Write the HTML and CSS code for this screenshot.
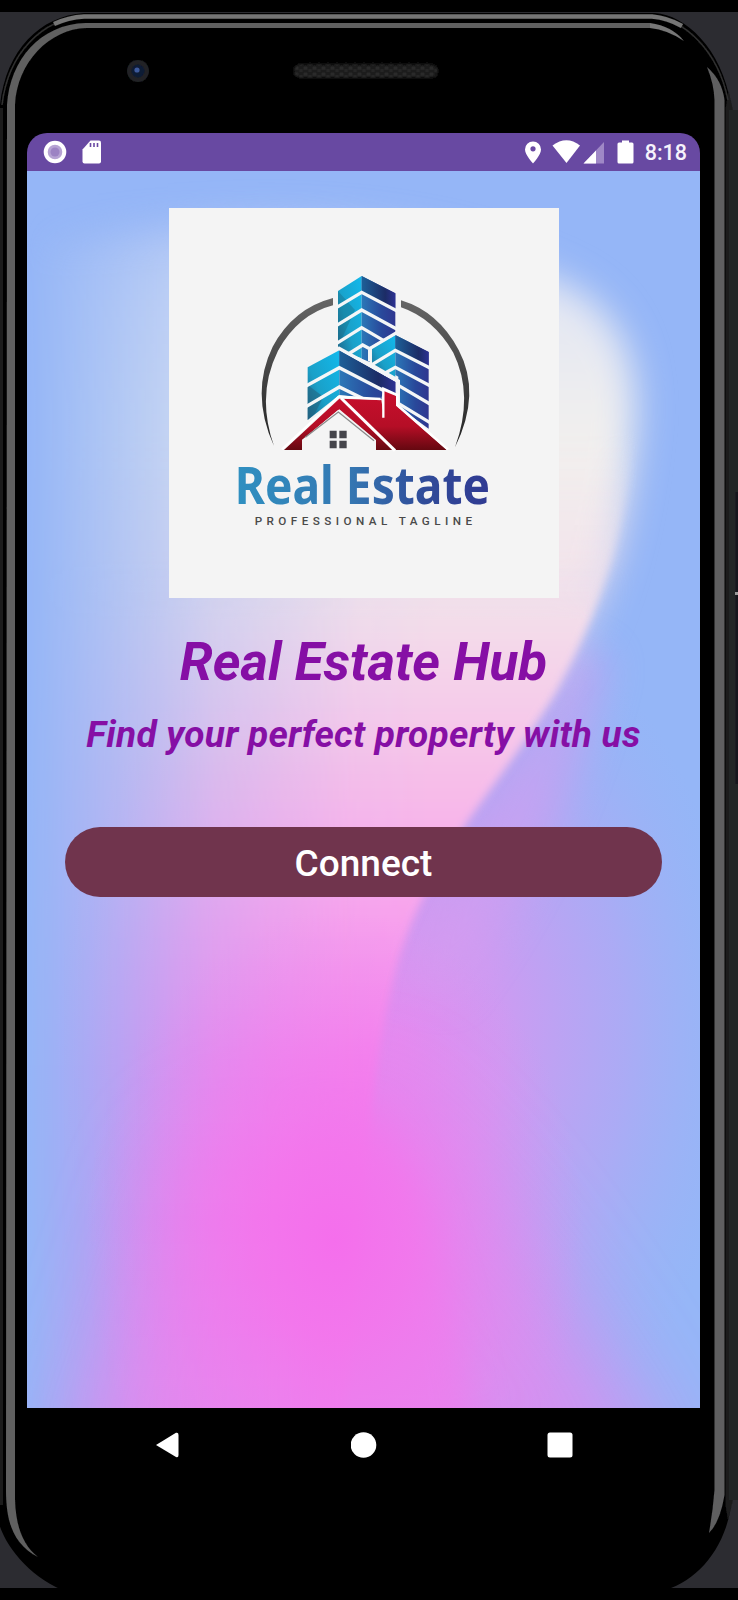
FILE: index.html
```html
<!DOCTYPE html>
<html lang="en">
<head>
<meta charset="utf-8">
<title>Real Estate Hub</title>
<link rel="stylesheet" href="styles.css">
</head>
<body>
<div class="device">
  <svg class="frame" viewBox="0 0 738 1600" aria-hidden="true">
    <defs>
      <filter id="soft"><feGaussianBlur stdDeviation="0.7"/></filter>
      <filter id="grille"><feGaussianBlur stdDeviation="1.1"/></filter>
      <pattern id="mesh" x="294" y="66" width="9" height="6" patternUnits="userSpaceOnUse">
        <rect width="9" height="6" fill="#181818"/><circle cx="2.5" cy="2" r="1.6" fill="#3a3a3a"/><circle cx="7" cy="4.5" r="1.4" fill="#363636"/>
      </pattern>
    </defs>
    <rect width="738" height="1600" fill="#000"/>
    <rect y="12" width="738" height="1576" fill="#2c2c31"/>
    <g filter="url(#soft)">
      <path d="M0 105C6 50 40 16 84 13H655C685 15 722 48 731 105V1505C726 1545 700 1580 665 1590H62C28 1575 4 1545-2 1520V105Z" fill="#050505"/>
      <path d="M725.500 110L728.500 90L733 110V1500L728 1520L725.500 1505Z" fill="#1c1c1d"/>
      <rect x="729" y="110" width="9" height="1390" fill="#242526"/>
      <rect x="735.500" y="492" width="4" height="292" fill="#17181a"/>
      <rect x="735" y="592" width="3" height="3" fill="#999"/>
      <path d="M2 105C8 53 42 19 84 16.500H652C684 19 718 50 728 100" fill="none" stroke="#303030" stroke-width="1.500"/>
      <path d="M54 24Q68 17.500 84 16.500H652Q668 18 682 26" fill="none" stroke="#747474" stroke-width="4.500"/>
      <path d="M7 105C10 60 40 24 86 23H650V28H86C50 29 17 62 15 105V1500C16 1530 25 1547 38 1557C15 1545 6 1525 6 1490Z" fill="#606060"/>
      <path d="M1.500 1505V108" stroke="#1a1a1a" stroke-width="3"/>
      <path d="M650 23Q672 26 684 41Q668 30 650 28Z" fill="#777"/>
      <path d="M707 67Q722 80 724.500 100V1495Q720 1522 709 1533Q713 1510 714.500 1490V100Q714 84 707 67Z" fill="#5f5f60"/>
      <circle cx="138" cy="71" r="11" fill="#202225"/>
      <circle cx="138" cy="71" r="6.500" fill="#111a35"/>
      <circle cx="137" cy="70" r="2.600" fill="#3d5a9c"/>
      <rect x="294" y="64" width="144" height="14" rx="7" fill="url(#mesh)" filter="url(#grille)"/>
    </g>
  </svg>

  <main class="screen">
    <header class="status">
      <svg class="status-left" viewBox="0 0 64 26">
        <circle cx="15" cy="13" r="9.300" fill="#b6a3d3" stroke="#fff" stroke-width="4"/><circle cx="15" cy="13" r="4.500" fill="#9c83c3"/>
        <path d="M42.500 10.500L50.500 1.500H59Q61 1.500 61 3.500V22.500Q61 24.500 59 24.500H44.500Q42.500 24.500 42.500 22.500Z" fill="#fff"/>
        <path d="M50.500 4V8M54 4V8M57.500 4V8" stroke="#6a49a3" stroke-width="1.600"/>
      </svg>
      <div class="status-right">
        <svg class="status-icons" viewBox="0 0 112 26">
          <path d="M10 2.500A8 8 0 0 1 18 10.500C18 16 10 24.500 10 24.500S2 16 2 10.500A8 8 0 0 1 10 2.500Z" fill="#fff"/><circle cx="10" cy="9.800" r="2.600" fill="#6a49a3"/>
          <path d="M29.500 6.500Q43.500-4 57 6.500L43.500 24Z" fill="#fff"/>
          <path d="M60.500 24.500L81 3V24.500Z" fill="#9f88c6"/><path d="M60.500 24.500L73 11.500V24.500Z" fill="#fff"/>
          <path d="M99 1.500H106V3.500H109Q110.500 3.500 110.500 5V23Q110.500 24.500 109 24.500H96Q94.500 24.500 94.500 23V5Q94.500 3.500 96 3.500H99Z" fill="#fff"/>
        </svg>
        <span class="clock">8:18</span>
      </div>
    </header>

    <section class="content">
      <svg class="wallpaper" viewBox="27 171 673 1236" preserveAspectRatio="none" aria-hidden="true">
        <defs>
          <filter id="b3" x="-20%" y="-20%" width="140%" height="140%"><feGaussianBlur stdDeviation="4"/></filter>
          <filter id="b20" x="-30%" y="-30%" width="160%" height="160%"><feGaussianBlur stdDeviation="18"/></filter>
          <filter id="b50" x="-50%" y="-50%" width="200%" height="200%"><feGaussianBlur stdDeviation="48"/></filter>
          <linearGradient id="tone" gradientUnits="userSpaceOnUse" x1="0" y1="171" x2="0" y2="1407">
            <stop offset="0" stop-color="#a9c1f5"/><stop offset=".1" stop-color="#e2e6f3"/><stop offset=".22" stop-color="#f2f0ee"/>
            <stop offset=".35" stop-color="#f3e0ea"/><stop offset=".5" stop-color="#f7bce9"/><stop offset=".6" stop-color="#f8a3ec"/>
            <stop offset=".72" stop-color="#f780ec"/><stop offset=".85" stop-color="#f572eb"/><stop offset="1" stop-color="#ee80ec"/>
          </linearGradient>
          <linearGradient id="fadeX" gradientUnits="userSpaceOnUse" x1="27" y1="0" x2="440" y2="0">
            <stop offset="0" stop-color="#000"/><stop offset=".15" stop-color="#383838"/><stop offset=".45" stop-color="#a8a8a8"/><stop offset=".8" stop-color="#f2f2f2"/><stop offset="1" stop-color="#fff"/>
          </linearGradient>
          <linearGradient id="upper" gradientUnits="userSpaceOnUse" x1="0" y1="560" x2="0" y2="740"><stop offset="0" stop-color="#fff"/><stop offset="1" stop-color="#000"/></linearGradient>
          <linearGradient id="lower" gradientUnits="userSpaceOnUse" x1="0" y1="430" x2="0" y2="620"><stop offset="0" stop-color="#000"/><stop offset="1" stop-color="#fff"/></linearGradient>
          <mask id="mx" maskUnits="userSpaceOnUse" x="-100" y="100" width="900" height="1400"><rect x="-100" y="100" width="900" height="1400" fill="url(#fadeX)"/></mask>
          <mask id="mu" maskUnits="userSpaceOnUse" x="-100" y="100" width="900" height="1400"><rect x="-100" y="100" width="900" height="1400" fill="url(#upper)"/></mask>
          <mask id="ml" maskUnits="userSpaceOnUse" x="-100" y="100" width="900" height="1400"><rect x="-100" y="100" width="900" height="1400" fill="url(#lower)"/></mask>
          <radialGradient id="mag"><stop offset="0" stop-color="#f56eec" stop-opacity=".95"/><stop offset=".3" stop-color="#f475ec" stop-opacity=".75"/><stop offset=".65" stop-color="#ee80ee" stop-opacity=".35"/><stop offset="1" stop-color="#e48cf0" stop-opacity="0"/></radialGradient>
          <radialGradient id="lav"><stop offset="0" stop-color="#e08ef0"/><stop offset=".3" stop-color="#d398f1" stop-opacity=".9"/><stop offset=".65" stop-color="#b3a7f4" stop-opacity=".75"/><stop offset="1" stop-color="#9db2f5" stop-opacity="0"/></radialGradient>
        </defs>
        <rect x="27" y="171" width="673" height="1236" fill="#95b6f7"/>
        <ellipse cx="400" cy="1040" rx="345" ry="470" fill="url(#lav)"/>
        <path d="M570 640L470 830L400 980L450 1000Q560 860 610 660Z" fill="#d49df0" opacity=".5" filter="url(#b20)"/>
        <path d="M370 1080Q500 1170 690 1500H60L180 1150Z" fill="#e08aef" opacity=".85" filter="url(#b50)"/>
        <g mask="url(#mx)">
          <g mask="url(#mu)"><path d="M27 245C200 215 400 205 560 280C625 310 645 370 632 450C622 540 600 610 556 692C520 752 488 790 462 830H-60V245Z" fill="url(#tone)" filter="url(#b20)"/></g>
          <g mask="url(#ml)"><path d="M27 225C200 190 400 190 560 275C625 310 645 370 632 450C622 540 600 610 556 692C520 752 488 790 462 830C425 888 404 930 392 985C383 1025 378 1060 374 1090C365 1160 360 1300 340 1460H-60V225Z" fill="url(#tone)" filter="url(#b3)" mask="url(#fadeLow)"/></g>
        </g>
        <path d="M374 1110C420 1170 450 1260 480 1460H300V1110Z" fill="#ee7ded" opacity=".75" filter="url(#b20)"/>
        <ellipse cx="335" cy="1240" rx="250" ry="330" fill="url(#mag)"/>
      </svg>

      <div class="logo">
        <svg class="logo-art" viewBox="0 0 870 840" role="img" aria-label="Real Estate">
          <defs>
            <linearGradient id="cy" x1="0" y1="1" x2="1" y2="0"><stop offset="0" stop-color="#1f6488"/><stop offset=".4" stop-color="#1aa0c8"/><stop offset="1" stop-color="#12b9ec"/></linearGradient>
            <linearGradient id="nv" x1="0" y1="0" x2="1" y2="0"><stop offset="0" stop-color="#2b78b8"/><stop offset=".6" stop-color="#29489a"/><stop offset="1" stop-color="#2f3690"/></linearGradient>
            <linearGradient id="dk" x1="0" y1="0" x2="1" y2="0"><stop offset="0" stop-color="#1d6098"/><stop offset=".7" stop-color="#1c2c66"/><stop offset="1" stop-color="#2d3192"/></linearGradient>
            <linearGradient id="rd" x1="0" y1="0" x2="0" y2="1"><stop offset="0" stop-color="#c80f2d"/><stop offset=".6" stop-color="#b50e26"/><stop offset="1" stop-color="#650810"/></linearGradient>
            <linearGradient id="word" gradientUnits="userSpaceOnUse" x1="55" y1="0" x2="803" y2="0"><stop offset="0" stop-color="#2f8fc0"/><stop offset=".45" stop-color="#3577b2"/><stop offset=".75" stop-color="#304b99"/><stop offset="1" stop-color="#303a92"/></linearGradient>
            <linearGradient id="arc" x1="0" y1="0" x2="0" y2="1"><stop offset="0" stop-color="#666"/><stop offset="1" stop-color="#222"/></linearGradient>
          </defs>
          <g fill="url(#arc)">
            <path d="M339 114Q220 145 158 260Q90 400 162 558Q108 405 174 272Q235 163 339 136Z"/>
            <path d="M543 121Q655 155 716 270Q785 400 705 562Q762 405 700 278Q640 175 543 142Z"/>
          </g>
          <path d="M425 48L354 93V260L375 278L425 295Z" fill="url(#cy)"/>
          <path d="M425 48L526 100V218L449 262V306L425 296Z" fill="url(#nv)"/>
          <path d="M425 48L526 100V150L425 95Z" fill="url(#dk)"/>
          <path d="M354 93L405 150L375 215L354 260Z" fill="#176078" opacity=".35"/>
          <path d="M526 225L456 264V310L526 350Z" fill="url(#cy)"/>
          <path d="M526 225L626 276V506L535 440V350L526 345Z" fill="url(#nv)"/>
          <path d="M526 225L626 276V322L526 270Z" fill="url(#dk)"/>
          <path d="M358 271L263 322V480L358 405Z" fill="url(#cy)"/>
          <path d="M263 375L310 410L285 460L263 480Z" fill="#215d78" opacity=".5"/>
          <path d="M358 271L526 366V400L490 388L484 418L358 405Z" fill="url(#nv)"/>
          <path d="M358 271L526 366V405L495 388L358 325Z" fill="url(#dk)"/>
          <g fill="none" stroke="#f4f6f7" stroke-width="10">
            <path d="M350 142L425 97L530 152M350 196L425 150L530 207M350 250L425 203L490 241M385 282L428 255L449 266V304"/>
            <path d="M354 263L535 363V448M449 266L530 218"/>
            <path d="M456 314L526 271L630 324M490 342L526 322L630 377M535 376L630 432M535 430L630 488"/>
            <path d="M258 378L358 323L492 392M258 440L358 381L430 416"/>
          </g>
          <path d="M192 570L358 416L484 420L491 465V393L528 408V437L680 570H468V540L358 448L246 540V570Z" fill="url(#rd)"/>
          <path d="M246 570V540L355 449L466 545V570Z" fill="#f4f4f4"/>
          <path d="M256 532L355 456L462 542" fill="none" stroke="#8a8a8a" stroke-width="4"/>
          <path d="M363 414L525 572" stroke="#fff" stroke-width="9"/>
          <path d="M186 568L356 410L482 417M490 473V386L532 405V435L684 568" stroke="#fff" stroke-width="7" fill="none"/>
          <path d="M329 512H350V535H329ZM358 512H380V535H358ZM329 542H350V565H329ZM358 542H380V565H358Z" fill="#45454b"/>
          <text class="wordmark" x="44" y="732" textLength="766" lengthAdjust="spacingAndGlyphs" fill="url(#word)">Real Estate</text>
          <text class="tagline-mark" x="104" y="795" textLength="652" lengthAdjust="spacing">PROFESSIONAL TAGLINE</text>
        </svg>
      </div>

      <h1 class="title">Real Estate Hub</h1>
      <p class="subtitle">Find your perfect property with us</p>
      <button class="connect" type="button">Connect</button>
    </section>

    <nav class="navbar">
      <svg viewBox="0 0 26 26"><path d="M1 13L21 .8Q23.500 0 23.500 3V23Q23.500 26 21 25Z" fill="#fff"/></svg>
      <svg viewBox="0 0 26 26"><circle cx="12.500" cy="13" r="12.800" fill="#fff"/></svg>
      <svg viewBox="0 0 26 26"><rect x=".5" y=".5" width="25" height="25" rx="2.500" fill="#fff"/></svg>
    </nav>
  </main>
</div>
</body>
</html>
```
FILE: styles.css
```css
* { box-sizing: border-box; }
body { margin: 0; background: #000; font-family: Roboto, "Liberation Sans", sans-serif; }
.device { position: relative; width: 738px; height: 1600px; overflow: hidden; padding: 133px 38px 0 27px; }
.frame { position: absolute; inset: 0; width: 738px; height: 1600px; }
.screen { position: relative; width: 673px; }
.status {
  display: flex; align-items: center; justify-content: space-between;
  height: 38px; padding: 0 13px 0 13px;
  background: #6849a2; border-radius: 20px 20px 0 0;
}
.status-left { width: 64px; height: 26px; }
.status-right { display: flex; align-items: center; gap: 10px; }
.status-icons { width: 112px; height: 26px; }
.clock { padding-top: 1px; color: #f6f2fb; font-size: 21.5px; font-weight: 500; line-height: 26px; }
.content {
  position: relative; display: flex; flex-direction: column; align-items: center;
  height: 1237px; padding-top: 37px; background: #95b6f7; overflow: hidden;
}
.wallpaper { position: absolute; inset: 0; width: 100%; height: 100%; }
.logo { position: relative; width: 390px; height: 390px; padding: 52px 0 0 51px; background: #f4f4f4; }
.logo-art { display: block; width: 290px; height: 280px; overflow: visible; }
.wordmark { font-family: "Noto Sans", sans-serif; font-weight: 700; font-size: 154px; }
.tagline-mark { font-family: Roboto, sans-serif; font-weight: 500; font-size: 35px; fill: #4a4a4a; }
.title {
  position: relative; margin: 32px 0 0; color: #860fa5;
  font-size: 53px; font-weight: 700; font-style: italic; line-height: 64px; white-space: nowrap;
}
.subtitle {
  position: relative; margin: 19px 0 0; color: #860fa5; letter-spacing: .26px;
  font-size: 37px; font-weight: 700; font-style: italic; line-height: 44px; white-space: nowrap;
}
.connect {
  position: relative; width: 597px; height: 70px; margin-top: 70px; padding: 3px 0 0;
  border: 0; border-radius: 35px; background: #70344d; color: #fff;
  font-family: inherit; font-size: 37px; font-weight: 500; line-height: 67px;
}
.navbar {
  display: flex; align-items: center; justify-content: space-between;
  height: 74px; padding: 0 127px 0 128px; background: #000;
}
.navbar svg { width: 26px; height: 26px; }
```
